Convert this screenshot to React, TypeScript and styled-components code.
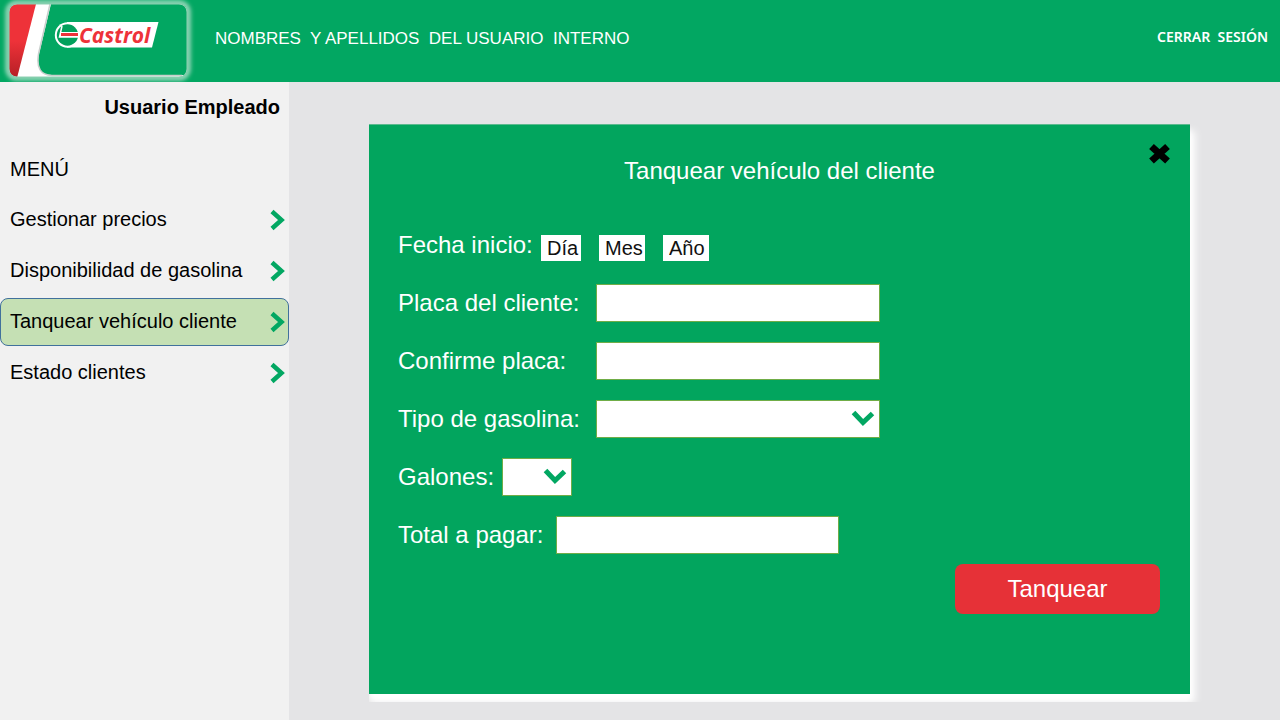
import React from "react";
import styled, { createGlobalStyle } from "styled-components";

const green = "#02a55e";

const GlobalStyle = createGlobalStyle`
  *, *::before, *::after { box-sizing: border-box; }
  body {
    margin: 0;
    font-family: "Liberation Sans", Arial, sans-serif;
    color: #000;
  }
  button, input, select { font: inherit; margin: 0; }
`;

const Page = styled.div`
  min-height: 100vh;
  display: flex;
  flex-direction: column;
  background: #e4e4e6;
`;

const TopBar = styled.header`
  display: flex;
  align-items: center;
  height: 82px;
  padding: 0 12px 0 0;
  background: #02a762;
  color: #fff;
`;

const LogoLink = styled.a`
  display: block;
  width: 200px;
  height: 82px;
`;

const UserName = styled.div`
  flex: 1;
  padding: 0 15px 5px;
  font-size: 17px;
  line-height: 20px;
  white-space: pre;
`;

const LogoutButton = styled.button`
  border: 0;
  padding: 0 0 8px;
  background: none;
  color: #fff;
  font-family: "Noto Sans", sans-serif;
  font-size: 14px;
  font-weight: 600;
  line-height: 20px;
  white-space: pre;
  cursor: pointer;
`;

const Body = styled.div`
  flex: 1;
  display: flex;
`;

const Sidebar = styled.aside`
  flex: 0 0 289px;
  background: #f1f1f1;
`;

const Role = styled.h2`
  margin: 0;
  padding: 13px 9px 0 0;
  font-size: 20px;
  line-height: 24px;
  text-align: right;
`;

const MenuTitle = styled.h3`
  margin: 0;
  padding: 38px 10px 15px;
  font-size: 20px;
  font-weight: 400;
  line-height: 24px;
`;

const MenuList = styled.ul`
  display: flex;
  flex-direction: column;
  gap: 3px;
  margin: 0;
  padding: 0;
  list-style: none;
`;

const MenuLink = styled.a<{ $active?: boolean }>`
  display: flex;
  align-items: center;
  justify-content: space-between;
  height: 48px;
  padding: 0 2px 0 9px;
  border: 1px solid ${(p) => (p.$active ? "#41719c" : "transparent")};
  border-radius: 8px;
  background: ${(p) => (p.$active ? "#c5e0b4" : "transparent")};
  color: #000;
  font-size: 20px;
  line-height: 24px;
  text-decoration: none;
`;

const MenuText = styled.span`
  padding-bottom: 2px;
`;

const Main = styled.main`
  flex: 1;
  padding: 42px 76px 18px 80px;
`;

const PanelFrame = styled.div`
  overflow: hidden;
  padding: 0 14px 8px 0;
`;

const Panel = styled.section`
  border-top: 1px solid #5cba8f;
  background: ${green};
  color: #fff;
  font-size: 24px;
  line-height: 28px;
  box-shadow: 0 6px 6px #fff, 4px 8px 8px 1px #fff;
`;

const PanelHeader = styled.div`
  display: grid;
  grid-template-columns: 22px 1fr 22px;
  padding: 18px 19px 0;
`;

const PanelTitle = styled.h1`
  grid-column: 2;
  margin: 0;
  padding-top: 14px;
  font-size: 24px;
  font-weight: 400;
  line-height: 28px;
  text-align: center;
`;

const CloseButton = styled.button`
  width: 22px;
  height: 22px;
  border: 0;
  padding: 0;
  background: none;
  cursor: pointer;
  svg { display: block; }
`;

const Form = styled.form`
  display: flex;
  flex-direction: column;
  gap: 20px;
  padding: 41px 30px 80px 29px;
`;

const Row = styled.div`
  display: flex;
  align-items: center;
  height: 38px;
`;

const Label = styled.label<{ $width: number }>`
  flex: 0 0 ${(p) => p.$width}px;
  white-space: nowrap;
`;

const TextInput = styled.input<{ $width: number }>`
  width: ${(p) => p.$width}px;
  height: 38px;
  padding: 0 8px;
  border: 1px solid #70ad47;
  background: #fff;
  color: #000;
  font-size: 20px;
`;

const SelectBox = styled.div<{ $width: number }>`
  display: grid;
  width: ${(p) => p.$width}px;
  height: 38px;
  align-items: center;
  > * { grid-area: 1 / 1; }
  svg { justify-self: end; margin-right: 5px; pointer-events: none; }
`;

const Select = styled.select`
  appearance: none;
  width: 100%;
  height: 38px;
  padding: 0 32px 0 8px;
  border: 1px solid #70ad47;
  border-radius: 0;
  background: #fff;
  color: #000;
  font-size: 20px;
`;

const DateFields = styled.div`
  display: flex;
  gap: 18px;
  padding-top: 5px;
`;

const DateInput = styled.input<{ $width: number }>`
  width: ${(p) => p.$width}px;
  height: 26px;
  border: 0;
  padding: 0 0 0 6px;
  background: #fff;
  color: #111;
  font-size: 20px;
  &::placeholder { color: #111; opacity: 1; }
`;

const SubmitButton = styled.button`
  align-self: flex-end;
  width: 205px;
  height: 50px;
  margin-top: -10px;
  border: 0;
  border-radius: 8px;
  background: #e63137;
  color: #fff;
  font-size: 24px;
  line-height: 28px;
  cursor: pointer;
`;

function CastrolLogo() {
  return (
    <svg width="200" height="82" viewBox="0 0 200 82" role="img" aria-label="Castrol">
      <defs>
        <filter id="glow" x="-10%" y="-20%" width="120%" height="140%">
          <feGaussianBlur stdDeviation="2" />
        </filter>
        <linearGradient id="red" x1="0" y1="0" x2="0" y2="1">
          <stop offset="0.5" stopColor="#ee3239" />
          <stop offset="1" stopColor="#b51f25" />
        </linearGradient>
        <clipPath id="badge">
          <rect x="9" y="4" width="178" height="73" rx="8" />
        </clipPath>
      </defs>
      <rect x="8" y="3" width="180" height="75" rx="9" fill="none" stroke="#a5dcc3" strokeWidth="5" filter="url(#glow)" />
      <g clipPath="url(#badge)">
        <rect x="9" y="4" width="178" height="73" fill="#02a762" />
        <path d="M9 4H51L39 54Q35 75 52 75L184 75V78H9Z" fill="#fff" />
        <path d="M50 4L38.500 54Q35 75 52 75.500H182" fill="none" stroke="#c9cfcc" strokeWidth="1.500" />
        <path d="M9 4H36L17 78H9Z" fill="url(#red)" />
      </g>
      <rect x="9" y="4" width="178" height="73" rx="8" fill="none" stroke="#8fd0b2" strokeWidth="1" />
      <path d="M67 22H158.500L152 47.500H67Z" fill="#fff" />
      <circle cx="67.500" cy="35" r="12.700" fill="#fff" />
      <circle cx="67.500" cy="35" r="10.700" fill="#02a05c" />
      <path d="M62 26L59.500 37H78" fill="none" stroke="#fff" strokeWidth="1.500" />
      <path d="M60 32H80V37H60Z" fill="#fff" />
      <path d="M61 34.500H78" stroke="#ee3239" strokeWidth="3" />
      <text x="79" y="43" fill="#ee3239" fontFamily="'Open Sans', sans-serif" fontSize="21" fontWeight="700" fontStyle="italic">
        Castrol
      </text>
    </svg>
  );
}

function ArrowRight() {
  return (
    <svg width="17" height="22" viewBox="0 0 17 22" aria-hidden="true">
      <path d="M3 2.500L12.500 11L3 19.500" fill="none" stroke="#02a762" strokeWidth="4.500" />
    </svg>
  );
}

function ArrowDown() {
  return (
    <svg width="24" height="18" viewBox="0 0 24 18" aria-hidden="true">
      <path d="M2.500 2.500L12 12.500L21.500 3.500" fill="none" stroke="#02a762" strokeWidth="5" />
    </svg>
  );
}

const menu = [
  { text: "Gestionar precios" },
  { text: "Disponibilidad de gasolina" },
  { text: "Tanquear vehículo cliente", active: true },
  { text: "Estado clientes" },
];

export default function App() {
  return (
    <Page>
      <GlobalStyle />
      <TopBar>
        <LogoLink href="#">
          <CastrolLogo />
        </LogoLink>
        <UserName>{"NOMBRES  Y APELLIDOS  DEL USUARIO  INTERNO"}</UserName>
        <LogoutButton type="button">{"CERRAR  SESIÓN"}</LogoutButton>
      </TopBar>
      <Body>
        <Sidebar>
          <Role>Usuario Empleado</Role>
          <MenuTitle>MENÚ</MenuTitle>
          <nav>
            <MenuList>
              {menu.map((item) => (
                <li key={item.text}>
                  <MenuLink href="#" $active={item.active} aria-current={item.active ? "page" : undefined}>
                    <MenuText>{item.text}</MenuText>
                    <ArrowRight />
                  </MenuLink>
                </li>
              ))}
            </MenuList>
          </nav>
        </Sidebar>
        <Main>
          <PanelFrame>
            <Panel>
              <PanelHeader>
                <PanelTitle>Tanquear vehículo del cliente</PanelTitle>
                <CloseButton type="button" aria-label="Cerrar">
                  <svg width="22" height="22" viewBox="0 0 22 22" aria-hidden="true">
                    <path d="M2.500 3.500L18.500 18M18.500 3.500L2.500 18" stroke="#000" strokeWidth="7" />
                  </svg>
                </CloseButton>
              </PanelHeader>
              <Form onSubmit={(e) => e.preventDefault()}>
                <Row>
                  <Label $width={143} htmlFor="dia">Fecha inicio:</Label>
                  <DateFields>
                    <DateInput $width={40} id="dia" placeholder="Día" aria-label="Día" />
                    <DateInput $width={46} placeholder="Mes" aria-label="Mes" />
                    <DateInput $width={46} placeholder="Año" aria-label="Año" />
                  </DateFields>
                </Row>
                <Row>
                  <Label $width={198} htmlFor="placa">Placa del cliente:</Label>
                  <TextInput $width={284} id="placa" />
                </Row>
                <Row>
                  <Label $width={198} htmlFor="confirme">Confirme placa:</Label>
                  <TextInput $width={284} id="confirme" />
                </Row>
                <Row>
                  <Label $width={198} htmlFor="tipo">Tipo de gasolina:</Label>
                  <SelectBox $width={284}>
                    <Select id="tipo" />
                    <ArrowDown />
                  </SelectBox>
                </Row>
                <Row>
                  <Label $width={104} htmlFor="galones">Galones:</Label>
                  <SelectBox $width={70}>
                    <Select id="galones" />
                    <ArrowDown />
                  </SelectBox>
                </Row>
                <Row>
                  <Label $width={158} htmlFor="total">Total a pagar:</Label>
                  <TextInput $width={283} id="total" />
                </Row>
                <SubmitButton type="submit">Tanquear</SubmitButton>
              </Form>
            </Panel>
          </PanelFrame>
        </Main>
      </Body>
    </Page>
  );
}
